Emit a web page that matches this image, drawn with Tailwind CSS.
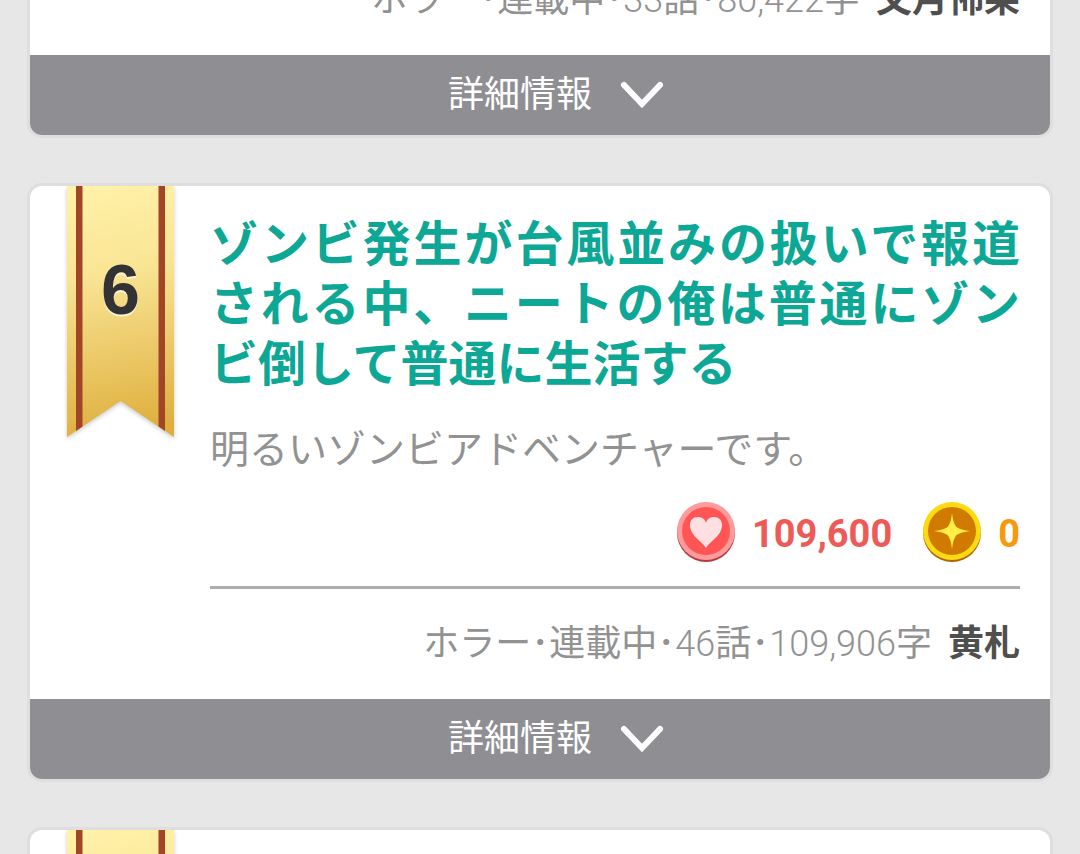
<!DOCTYPE html>
<html lang="ja">
<head>
    <meta charset="utf-8">
    <meta name="viewport" content="width=device-width, initial-scale=1">
    <title>ホラー 週間ランキング</title>
    <script src="https://cdn.jsdelivr.net/npm/@tailwindcss/browser@4"></script>
</head>
<body class="h-screen overflow-hidden bg-[#e7e7e7] font-[Roboto,'Noto_Sans_CJK_JP',sans-serif]">
    <!-- shared gradients and icons -->
    <svg class="absolute size-0" aria-hidden="true">
        <defs>
            <linearGradient id="gold" gradientUnits="userSpaceOnUse" x1="30" y1="0" x2="77" y2="240">
                <stop offset="0" stop-color="#fff1a8"/>
                <stop offset="0.35" stop-color="#f9e594"/>
                <stop offset="1" stop-color="#dfb040"/>
            </linearGradient>
            <symbol id="chevron" viewBox="0 0 44 30">
                <path d="M4 5L22 24L40 5" fill="none" stroke="#fff" stroke-width="6" stroke-linecap="round"/>
            </symbol>
            <symbol id="ribbon" viewBox="0 0 107 251">
                <path d="M0 0H107V251L53.500 215L0 251Z" fill="url(#gold)"/>
                <path d="M9 0H15.500V240.600L9 245ZM91.500 0H98V245L91.500 240.600Z" fill="#a04528"/>
            </symbol>
        </defs>
    </svg>

    <main class="flex flex-col gap-[45px] px-[27px]">
        <article class="overflow-hidden rounded-b-[15px] border-[3px] border-t-0 border-[#dedede] bg-white">
            <div class="flex h-[55px] flex-col justify-end pr-[30px] pb-7">
                <p class="text-right text-[36px] leading-[54px] text-[#929292]">ホラー･連載中･<span class="font-light">33</span>話･<span class="font-light">80,422</span>字<a href="#" class="ml-4 font-bold text-[#4f4f4f]">文月怖果</a></p>
            </div>
            <button type="button" class="flex h-20 w-full items-center justify-center gap-7 bg-[#8f8e93] pl-8 text-[36px] text-white">
                詳細情報
                <svg class="h-[30px] w-11"><use href="#chevron"/></svg>
            </button>
        </article>

        <article class="overflow-hidden rounded-[15px] border-[3px] border-[#dedede] bg-white">
            <div class="flex pr-[30px] pl-[37px]">
                <div class="relative h-[251px] w-[107px] shrink-0 drop-shadow-[0_2px_2px_rgba(0,0,0,0.2)]">
                    <svg class="h-full w-full"><use href="#ribbon"/></svg>
                    <span class="absolute inset-x-0 top-16 text-center font-['Liberation_Sans',sans-serif] text-[70px] leading-20 font-bold text-[#333] [text-shadow:0_2px_0_rgba(255,255,255,0.7)]">6</span>
                </div>
                <div class="ml-9 min-w-0 flex-1">
                    <h3 class="pt-[29px] text-justify text-[48px] leading-[60px] font-bold text-[#0da795]">
                        <a href="#">ゾンビ発生が台風並みの扱いで報道される中、ニートの俺は普通にゾンビ倒して普通に生活する</a>
                    </h3>
                    <p class="pt-[25px] text-[39px] leading-[60px] text-[#929292]">明るいゾンビアドベンチャーです。</p>
                    <div class="flex items-start justify-end border-b-[3px] border-[#adadad] pt-[22px] pb-5 text-[38px] leading-16 font-bold">
                        <svg class="mr-4 size-[60px]" viewBox="0 0 60 60">
                            <circle cx="30" cy="31" r="29" fill="#b03a3e"/>
                            <circle cx="30" cy="29" r="29" fill="#ff9b9b"/>
                            <circle cx="30" cy="29" r="24" fill="#ff5655"/>
                            <path d="M30 46C26 39 14 34 14 23C14 18 17 15 22 15C26 15 29 17 30 21C31 17 34 15 38 15C43 15 46 18 46 23C46 34 34 39 30 46Z" fill="#ffdfe2"/>
                        </svg>
                        <span class="text-[#ee5a57]">109,600</span>
                        <svg class="mr-4 ml-[30px] size-[60px]" viewBox="0 0 60 60">
                            <circle cx="30" cy="31" r="29" fill="#b0650a"/>
                            <circle cx="30" cy="29" r="29" fill="#fddb10"/>
                            <circle cx="30" cy="29" r="24" fill="#d07a00"/>
                            <path d="M30 11Q31 21 34.500 25Q39 28 48 29Q39 30 34.500 33Q31 37 30 47Q29 37 25.500 33Q21 30 12 29Q21 28 25.500 25Q29 21 30 11Z" fill="#ffee45"/>
                        </svg>
                        <span class="text-[#f8990d]">0</span>
                    </div>
                    <p class="pt-7 pb-7 text-right text-[36px] leading-[54px] text-[#929292]">ホラー･連載中･<span class="font-light">46</span>話･<span class="font-light">109,906</span>字<a href="#" class="ml-4 font-bold text-[#4f4f4f]">黄札</a></p>
                </div>
            </div>
            <button type="button" class="flex h-20 w-full items-center justify-center gap-7 bg-[#8f8e93] pl-8 text-[36px] text-white">
                詳細情報
                <svg class="h-[30px] w-11"><use href="#chevron"/></svg>
            </button>
        </article>

        <article class="overflow-hidden rounded-t-[15px] border-[3px] border-b-0 border-[#dedede] bg-white pl-[37px]">
            <svg class="h-[251px] w-[107px] drop-shadow-[0_2px_2px_rgba(0,0,0,0.2)]"><use href="#ribbon"/></svg>
        </article>
    </main>
</body>
</html>
